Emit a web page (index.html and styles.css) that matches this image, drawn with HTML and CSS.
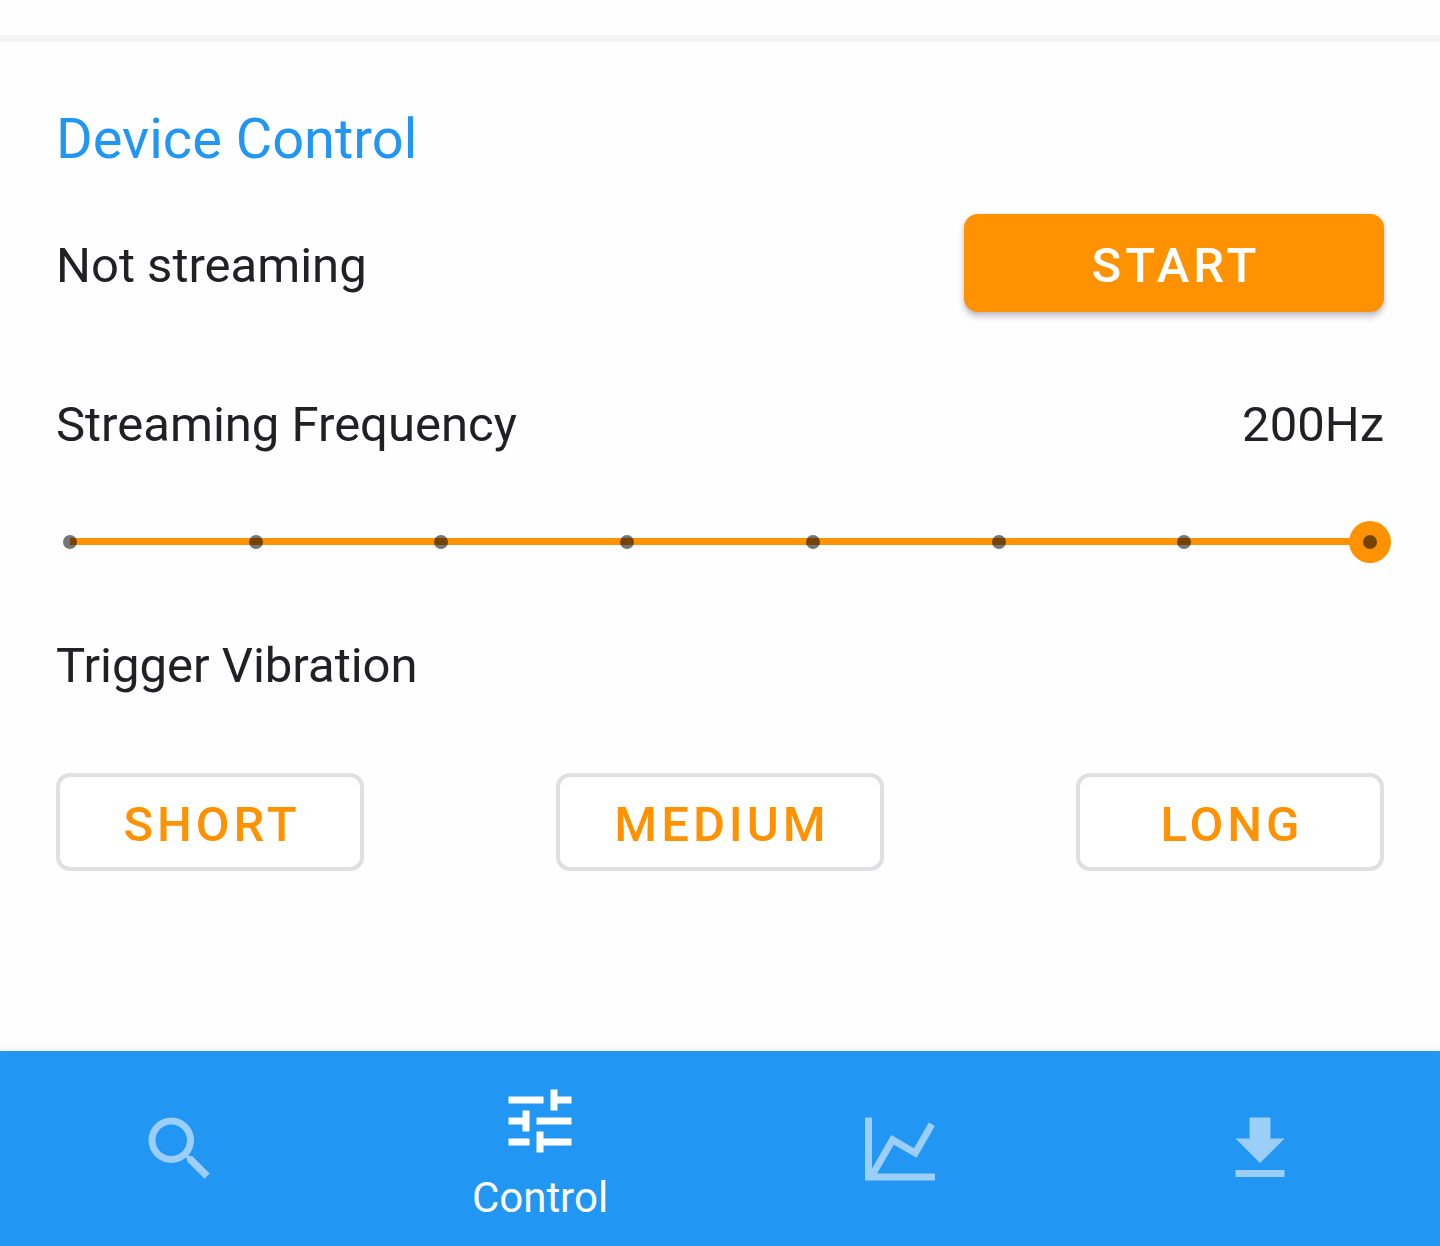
FILE: index.html
```html
<!DOCTYPE html>
<html lang="en">
<head>
  <meta charset="utf-8">
  <meta name="viewport" content="width=device-width, initial-scale=1">
  <title>Device Control</title>
  <link rel="stylesheet" href="styles.css">
</head>
<body>
  <main class="panel">
    <h1 class="title">Device Control</h1>

    <div class="row stream-row">
      <p class="text">Not streaming</p>
      <button class="btn btn-primary" type="button">START</button>
    </div>

    <div class="row frequency-row">
      <label class="text" for="frequency">Streaming Frequency</label>
      <output class="text" for="frequency">200Hz</output>
    </div>

    <div class="slider">
      <input class="slider-input" id="frequency" type="range" min="0" max="7" step="1" value="7">
      <div class="slider-ticks" aria-hidden="true">
        <span class="tick"></span><span class="tick"></span><span class="tick"></span><span class="tick"></span>
        <span class="tick"></span><span class="tick"></span><span class="tick"></span><span class="tick"></span>
      </div>
    </div>

    <h2 class="text">Trigger Vibration</h2>
    <div class="row vibration-row">
      <button class="btn btn-outline" type="button">SHORT</button>
      <button class="btn btn-outline" type="button">MEDIUM</button>
      <button class="btn btn-outline" type="button">LONG</button>
    </div>
  </main>

  <nav class="tabs">
    <a class="tab" href="#search" aria-label="Search">
      <svg class="icon" viewBox="0 0 24 24"><path d="M15.5 14h-.79l-.28-.27A6.471 6.471 0 0 0 16 9.5 6.5 6.5 0 1 0 9.5 16c1.61 0 3.09-.59 4.23-1.57l.27.28v.79l5 4.99L20.49 19l-4.99-5zm-6 0C7.01 14 5 11.99 5 9.5S7.01 5 9.5 5 14 7.01 14 9.5 11.99 14 9.5 14z"/></svg>
    </a>
    <a class="tab tab-active" href="#control" aria-current="page">
      <svg class="icon" viewBox="0 0 24 24"><path d="M3 17v2h6v-2H3zM3 5v2h10V5H3zm10 16v-2h8v-2h-8v-2h-2v6h2zM7 9v2H3v2h4v2h2V9H7zm14 4v-2H11v2h10zm-6-4h2V7h4V5h-4V3h-2v6z"/></svg>
      <span class="tab-label">Control</span>
    </a>
    <a class="tab" href="#chart" aria-label="Chart">
      <svg class="icon" viewBox="0 0 24 24"><path d="M16 11.78L20.24 4.45 21.97 5.45 16.74 14.5 10.23 10.75 5.46 19H22v2H2V3h2v14.54L9.5 8z"/></svg>
    </a>
    <a class="tab" href="#download" aria-label="Download">
      <svg class="icon" viewBox="0 0 24 24"><path d="M19 9h-4V3H9v6H5l7 7 7-7zM5 18v2h14v-2H5z"/></svg>
    </a>
  </nav>
</body>
</html>
```
FILE: styles.css
```css
:root {
  --blue: #2196f3;
  --orange: #ff9200;
  --ink: #212023;
}

* {
  box-sizing: border-box;
}

body {
  display: flex;
  flex-direction: column;
  min-height: 100vh;
  margin: 0;
  padding-top: 35px;
  background: #fefefe;
  color: var(--ink);
  font-family: Roboto, sans-serif;
}

.panel {
  flex: 1;
  padding: 64px 56px;
  border-top: 7px solid #f5f5f5;
}

.title {
  margin: 0 0 42px;
  color: var(--blue);
  font-size: 56px;
  font-weight: 400;
  line-height: 66px;
}

.text {
  margin: 0;
  font-size: 49px;
  font-weight: 400;
  line-height: 60px;
}

.row {
  display: flex;
  align-items: baseline;
  justify-content: space-between;
}

.stream-row {
  margin-bottom: 83px;
}

.frequency-row {
  margin-bottom: 66px;
}

/* The wider left padding balances the letter-spacing after the last letter */
.btn {
  min-width: 308px;
  height: 98px;
  padding: 6px 50px 0 54px;
  border: 0;
  border-radius: 14px;
  font-family: inherit;
  font-size: 49px;
  font-weight: 500;
  line-height: 58px;
  letter-spacing: 4px;
  cursor: pointer;
}

.btn-primary {
  width: 420px;
  background: var(--orange);
  color: #fff;
  box-shadow: 0 5px 6px rgba(30, 20, 50, 0.22), 0 1px 4px rgba(30, 20, 50, 0.12);
}

.btn-outline {
  border: 4px solid #e0dfe2;
  background: #fff;
  color: var(--orange);
}

.slider {
  position: relative;
  margin: 0 -7px 73px;
}

.slider-input {
  display: block;
  width: 100%;
  height: 42px;
  margin: 0;
  appearance: none;
  background: linear-gradient(var(--orange), var(--orange)) 21px 17px / calc(100% - 42px) 7px no-repeat;
  cursor: pointer;
}

.slider-input::-webkit-slider-thumb {
  width: 42px;
  height: 42px;
  appearance: none;
  border-radius: 50%;
  background: var(--orange);
}

.slider-input::-moz-range-thumb {
  width: 42px;
  height: 42px;
  border: 0;
  border-radius: 50%;
  background: var(--orange);
}

/* Step marks lie over both the track and the thumb */
.slider-ticks {
  position: absolute;
  inset: 0 14px;
  display: flex;
  align-items: center;
  justify-content: space-between;
  pointer-events: none;
}

.tick {
  width: 14px;
  height: 14px;
  border-radius: 50%;
  background: rgba(0, 0, 0, 0.54);
}

.vibration-row {
  margin-top: 77px;
}

.tabs {
  display: grid;
  grid-template-columns: repeat(4, 1fr);
  min-height: 195px;
  background: var(--blue);
  box-shadow: 0 -2px 6px rgba(0, 0, 0, 0.06);
}

.tab {
  display: flex;
  flex-direction: column;
  align-items: center;
  justify-content: center;
  gap: 10px;
  color: #9bcff9;
  text-decoration: none;
}

.tab-active {
  padding-top: 5px;
  color: #fff;
}

.tab-label {
  font-size: 42px;
  line-height: 50px;
}

.icon {
  width: 84px;
  height: 84px;
  fill: currentColor;
}
```
